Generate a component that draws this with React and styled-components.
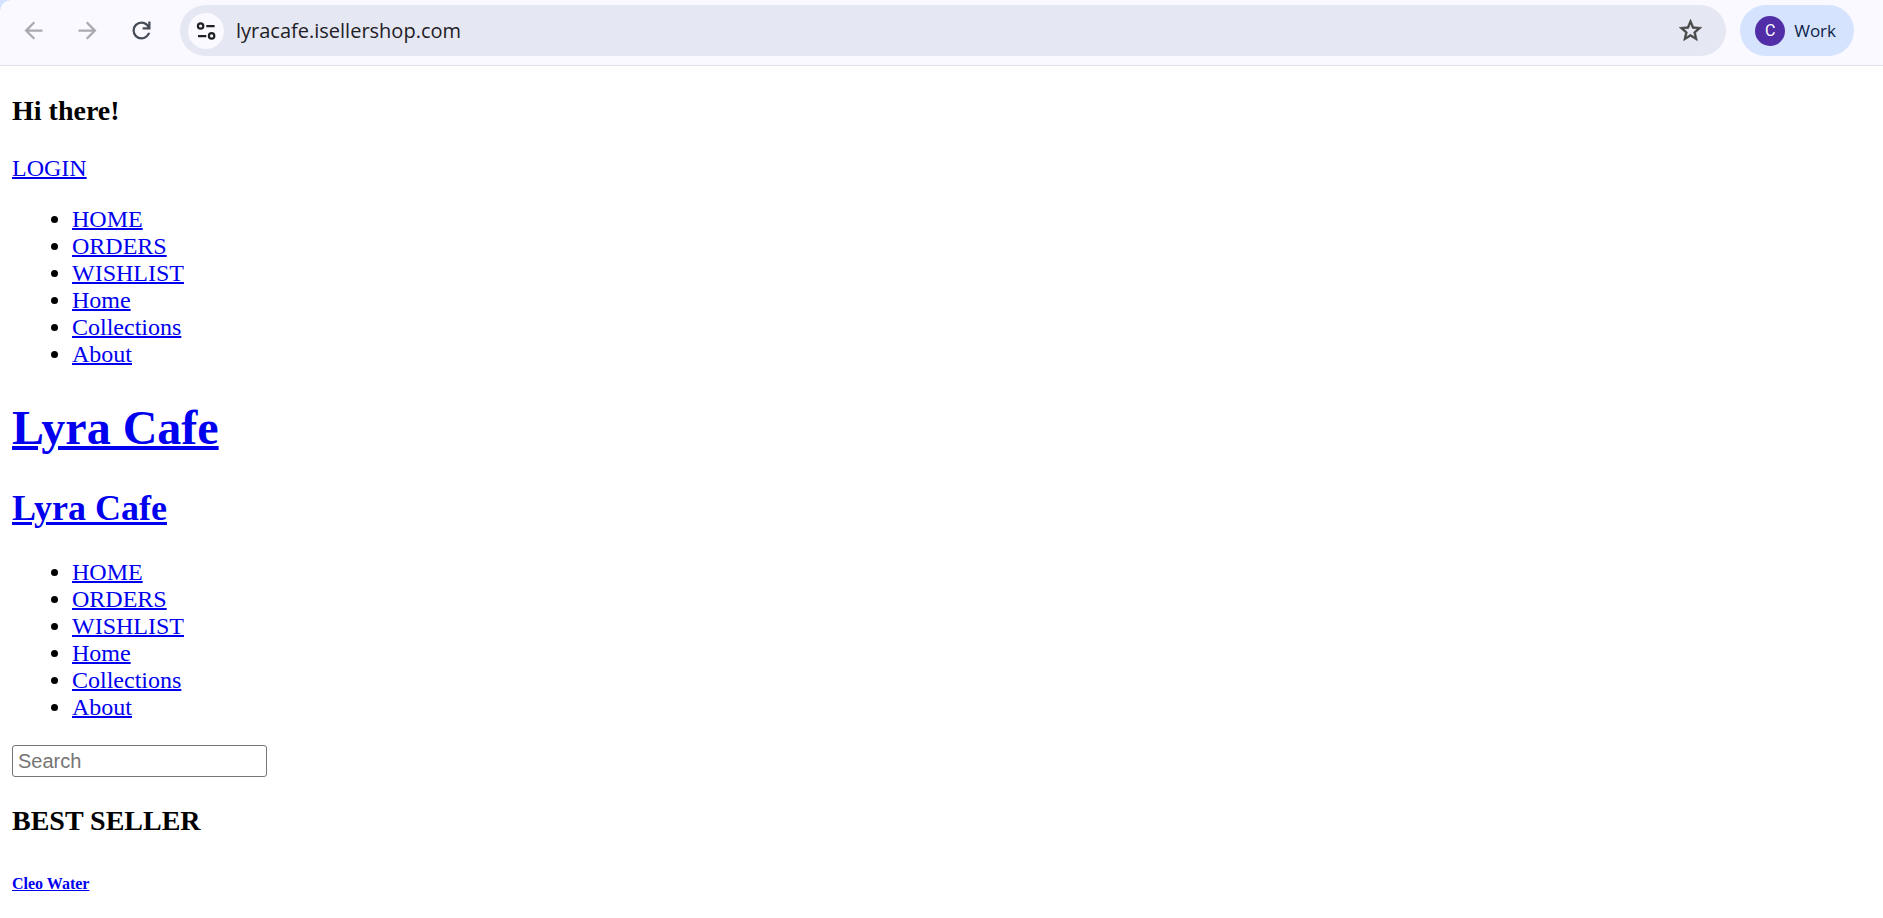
import React from "react";
import styled, { createGlobalStyle } from "styled-components";
import { MdArrowBack, MdArrowForward } from "react-icons/md";

const GlobalStyle = createGlobalStyle`
  body {
    margin: 0;
    background: #fff;
    color: #000;
    font-family: "Liberation Serif", "Times New Roman", serif;
    font-size: 24px;
    line-height: 27px;
  }
`;

const Toolbar = styled.header`
  display: flex;
  align-items: center;
  box-sizing: border-box;
  height: 66px;
  padding: 0 29px 4px 6px;
  border-bottom: 1px solid #dfe1eb;
  background: radial-gradient(circle at 100% 100%, #f9f9ff 9px, #d3e3fd 10px)
      top left / 10px 10px no-repeat,
    #f9f9ff;
  font-family: "Open Sans", "Noto Sans", sans-serif;
`;

const NavButton = styled.button`
  display: flex;
  align-items: center;
  justify-content: center;
  flex: none;
  width: 54px;
  height: 54px;
  padding: 0;
  border: 0;
  background: none;
  color: ${(props) => (props.disabled ? "#a9aab0" : "#474b57")};
  svg {
    width: 27px;
    height: 27px;
  }
`;

const AddressBar = styled.div`
  display: flex;
  align-items: center;
  flex: 1;
  box-sizing: border-box;
  height: 51px;
  margin-left: 12px;
  padding: 0 22px 0 8px;
  border-radius: 26px;
  background: #e5e8f3;
`;

const SiteInfo = styled.button`
  flex: none;
  width: 36px;
  height: 36px;
  padding: 0;
  border: 0;
  border-radius: 50%;
  background: #f9f9ff;
  svg {
    display: block;
  }
`;

const Url = styled.input`
  flex: 1;
  min-width: 0;
  margin-left: 12px;
  padding: 0;
  border: 0;
  outline: 0;
  background: none;
  color: #1f2026;
  font-family: inherit;
  font-size: 20px;
  line-height: 28px;
`;

const StarButton = styled.button`
  display: flex;
  padding: 0;
  border: 0;
  background: none;
  color: #474747;
`;

const Profile = styled.button`
  display: flex;
  align-items: center;
  gap: 9px;
  height: 51px;
  margin-left: 14px;
  padding: 0 18px 0 15px;
  border: 0;
  border-radius: 26px;
  background: #d5e3ff;
  color: #0b2545;
  font-family: inherit;
  font-size: 17px;
`;

const Avatar = styled.span`
  width: 30px;
  height: 30px;
  border-radius: 50%;
  background: #512da8;
  color: #fff;
  font-family: Roboto, sans-serif;
  font-size: 16px;
  line-height: 30px;
  text-align: center;
`;

const Page = styled.main`
  display: flow-root;
  padding: 1px 12px 0;
`;

const Link = styled.a`
  color: #0000ee;
  text-decoration: underline;
  text-decoration-thickness: 2px;
`;

const Title = styled.h1`
  margin: 32px 0;
  font-size: 48px;
  line-height: 56px;
  ${Link} {
    text-decoration-thickness: 4px;
  }
`;

const Subtitle = styled.h2`
  margin: 32px 0 31px;
  font-size: 36px;
  line-height: 40px;
  ${Link} {
    text-decoration-thickness: 3px;
  }
`;

const Heading = styled.h3`
  margin: 28px 0;
  font-size: 28px;
  line-height: 32px;
`;

const ProductName = styled.h6`
  margin: 38px 0;
  font-size: 16px;
  line-height: 18px;
  ${Link} {
    text-decoration-thickness: 1px;
  }
`;

const Menu = styled.ul`
  margin: 24px 0;
  padding-left: 60px;
`;

const SearchInput = styled.input`
  display: block;
  box-sizing: border-box;
  width: 255px;
  height: 32px;
  padding: 0 5px;
  border: 1px solid #767676;
  border-radius: 3px;
  font-family: "Liberation Sans", Arial, sans-serif;
  font-size: 20px;
  &::placeholder {
    color: #757575;
  }
`;

const links = ["HOME", "ORDERS", "WISHLIST", "Home", "Collections", "About"];

const MenuList = () => (
  <Menu>
    {links.map((item) => (
      <li key={item}>
        <Link href="#">{item}</Link>
      </li>
    ))}
  </Menu>
);

const ReloadIcon = () => (
  <svg viewBox="0 -960 960 960" fill="currentColor">
    <path d="M480-160q-134 0-227-93t-93-227q0-134 93-227t227-93q69 0 132 28.5T720-690v-110h80v280H520v-80h168q-32-56-87.5-88T480-720q-100 0-170 70t-70 170q0 100 70 170t170 70q77 0 139-44t87-116h84q-28 106-114 173t-196 67Z" />
  </svg>
);

const StarIcon = () => (
  <svg
    width="27"
    height="27"
    viewBox="0 0 24 24"
    fill="currentColor"
    stroke="currentColor"
    strokeWidth="0.5"
  >
    <path d="M22 9.24l-7.19-.62L12 2 9.19 8.63 2 9.24l5.46 4.73L5.82 21 12 17.27 18.18 21l-1.63-7.03L22 9.24zM12 15.4l-3.76 2.27 1-4.28-3.32-2.88 4.38-.38L12 6.1l1.71 4.04 4.38.38-3.32 2.88 1 4.28L12 15.4z" />
  </svg>
);

const TuneIcon = () => (
  <svg width="36" height="36" fill="none" stroke="#1f2023" strokeWidth="2.2">
    <circle cx="12.6" cy="13" r="2.7" />
    <path d="M18.3 13.2h8.3M10 23.2h8.3" />
    <circle cx="23.6" cy="22.9" r="2.7" />
  </svg>
);

const App = () => {
  return (
    <>
      <GlobalStyle />
      <Toolbar>
        <NavButton disabled aria-label="Back">
          <MdArrowBack />
        </NavButton>
        <NavButton disabled aria-label="Forward">
          <MdArrowForward />
        </NavButton>
        <NavButton aria-label="Reload">
          <ReloadIcon />
        </NavButton>
        <AddressBar>
          <SiteInfo aria-label="View site information">
            <TuneIcon />
          </SiteInfo>
          <Url
            type="text"
            aria-label="Address"
            defaultValue="lyracafe.isellershop.com"
            spellCheck={false}
          />
          <StarButton aria-label="Bookmark this page">
            <StarIcon />
          </StarButton>
        </AddressBar>
        <Profile>
          <Avatar>C</Avatar>
          Work
        </Profile>
      </Toolbar>
      <Page>
        <Heading>Hi there!</Heading>
        <Link href="#">LOGIN</Link>
        <MenuList />
        <Title>
          <Link href="#">Lyra Cafe</Link>
        </Title>
        <Subtitle>
          <Link href="#">Lyra Cafe</Link>
        </Subtitle>
        <MenuList />
        <SearchInput type="search" aria-label="Search" placeholder="Search" />
        <Heading>BEST SELLER</Heading>
        <ProductName>
          <Link href="#">Cleo Water</Link>
        </ProductName>
      </Page>
    </>
  );
};

export default App;
